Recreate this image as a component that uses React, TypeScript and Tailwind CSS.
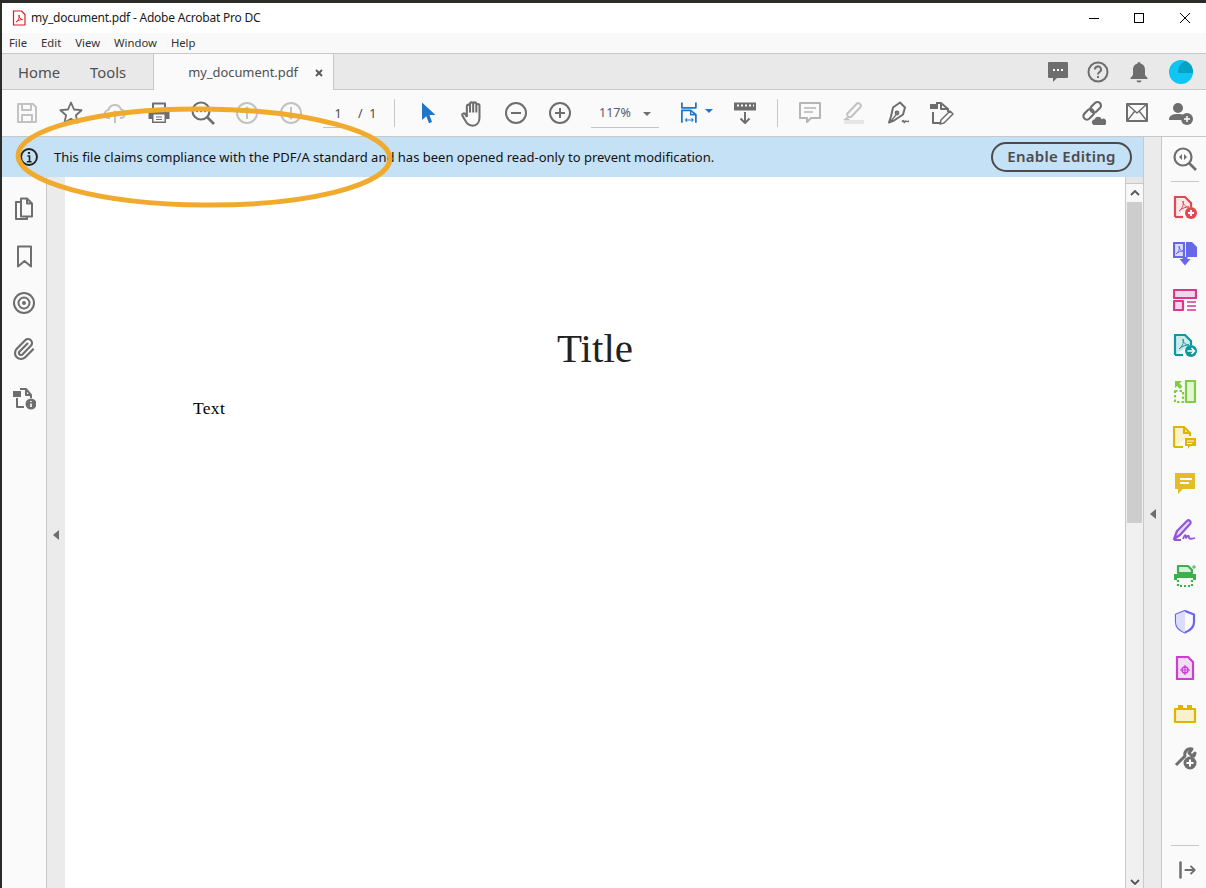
import type { ReactNode } from "react";

// 24x24 line icon, the toolbar's default look
function Ico({ children, color = "#6e6e6e", size = 24, sw = 2 }: { children: ReactNode; color?: string; size?: number; sw?: number }) {
  return (
    <svg width={size} height={size} viewBox="0 0 24 24" fill="none" stroke={color} strokeWidth={sw} strokeLinejoin="round">
      {children}
    </svg>
  );
}

const OFF = "#c2c2c2";
const GREY = "#6e6e6e";
const BLUE = "#1f76c9";

function Slot({ children }: { children: ReactNode }) {
  return <div className="flex h-[46px] w-[44px] shrink-0 items-center justify-center">{children}</div>;
}

function Divider() {
  return <div className="h-[28px] w-px shrink-0 bg-[#c8c8c8]" />;
}

function SideItem({ children }: { children: ReactNode }) {
  return <div className="flex h-[46px] shrink-0 items-center justify-center">{children}</div>;
}

function ToolBar() {
  return (
    <div className="flex h-[46px] shrink-0 items-center bg-[#fafafa] pl-[3px]">
      <Slot>
        <Ico color={OFF}><path d="M3 3h15l3 3v15H3z" /><path d="M7 3v6h9V3M7 21v-7h10v7" /></Ico>
      </Slot>
      <Slot>
        <Ico sw={1.8}><path d="M12 1.500l3 7 7.600.7-5.700 5 1.700 7.500-6.600-4-6.600 4 1.700-7.500-5.700-5 7.600-.7z" /></Ico>
      </Slot>
      <Slot>
        <Ico color={OFF}><path d="M7 17H6a4 4 0 0 1-.5-8A6.500 6.500 0 0 1 18 8.500a4.300 4.300 0 0 1 0 8.500h-1" /><path d="M12 22V11M8.500 14l3.500-3.500 3.500 3.500" /></Ico>
      </Slot>
      <Slot>
        <Ico>
          <path d="M6 8V2.500h12V8" strokeWidth="2" />
          <path d="M1.500 8h21v10h-3.500v4H5v-4H1.500z" fill={GREY} stroke="none" />
          <path d="M6.500 13.500h11V20.500h-11z" fill="#fafafa" stroke="none" />
          <path d="M9 16h6M9 18.500h6" strokeWidth="1" />
        </Ico>
      </Slot>
      <Slot>
        <Ico sw={2.2}>
          <circle cx="10" cy="10" r="8.500" />
          <path d="M16 16l7 7" strokeWidth="2.600" />
          <path d="M6 10h.01M10 10h.01M14 10h.01" strokeWidth="2.400" strokeLinecap="round" />
        </Ico>
      </Slot>
      <Slot>
        <Ico color={OFF}><circle cx="12" cy="12" r="10" /><path d="M12 18V7M8.500 10L12 6.500l3.500 3.500" /></Ico>
      </Slot>
      <Slot>
        <Ico color={OFF}><circle cx="12" cy="12" r="10" /><path d="M12 6v11M8.500 14l3.500 3.500 3.500-3.500" /></Ico>
      </Slot>
      <div className="flex w-[66px] shrink-0 items-center text-[12.500px] text-[#4b4b4b]">
        <span className="ml-[10px] w-[30px] border-b border-[#c4c4c4] pb-[3px] pt-[7px] text-center">1</span>
        <span className="ml-[5px] pt-[3px]">/&nbsp;&nbsp;1</span>
      </div>
      <div className="ml-[15px]"><Divider /></div>
      <div className="ml-[11px]">
        <Slot>
          <Ico color={BLUE}><path d="M6 1.500l13.500 12.500h-6l2.500 7-3 1.200-2.700-7L6 19z" fill={BLUE} stroke="none" /></Ico>
        </Slot>
      </div>
      <Slot>
        <Ico sw={1.8} size={27}>
          <path d="M7 15V5.500a1.400 1.400 0 0 1 2.800 0V11M9.800 11V3.500a1.400 1.400 0 0 1 2.800 0V11M12.600 11V3.500a1.400 1.400 0 0 1 2.800 0V11M15.400 11V5a1.400 1.400 0 0 1 2.800 0v11c0 4-2.500 6.800-6.200 6.800-3.300 0-4.800-1.500-6.300-4.300l-2.700-4.600c-.8-1.500 1.500-2.800 2.600-1.300L7 15" />
        </Ico>
      </Slot>
      <Slot>
        <Ico><circle cx="12" cy="12" r="10" /><path d="M7 12h10" /></Ico>
      </Slot>
      <Slot>
        <Ico><circle cx="12" cy="12" r="10" /><path d="M7 12h10M12 7v10" /></Ico>
      </Slot>
      <div className="ml-[9px] flex w-[68px] shrink-0 items-center border-b border-[#c4c4c4] pb-[4px] pl-[8px] pt-[6px] text-[12.500px] text-[#5a5a6e]">
        <span>117%</span>
        <span className="ml-auto mr-[8px] h-0 w-0 border-x-[4px] border-t-[4px] border-x-transparent border-t-[#6e6e6e]" />
      </div>
      <div className="ml-[22px] flex w-[32px] shrink-0 items-center">
        <Ico color={BLUE} size={24}>
          <path d="M1 0v6h16V0" strokeWidth="2" />
          <path d="M1 23V9h10l6 5v9" strokeWidth="2" />
          <path d="M11 9v5h6" strokeWidth="1.500" />
          <path d="M5 20h9M7 18l-2 2 2 2M12 18l2 2-2 2" strokeWidth="1.200" />
        </Ico>
        <span className="ml-[3px] mb-[4px] h-0 w-0 border-x-[4px] border-t-[4px] border-x-transparent border-t-[#1f76c9]" />
      </div>
      <div className="ml-[20px] flex w-[24px] shrink-0 items-center justify-center">
        <Ico>
          <path d="M1 1.500h22v8H1z" fill={GREY} stroke="none" />
          <path d="M4 4.500h2M8 4.500h2M12 4.500h2M16 4.500h2M20 4.500h1" stroke="#fafafa" strokeWidth="1.800" />
          <path d="M12 11v11M7.500 17.500L12 22l4.500-4.500" />
        </Ico>
      </div>
      <div className="ml-[20px]"><Divider /></div>
      <div className="ml-[10px]">
        <Slot>
          <Ico color="#b5b5b5"><path d="M2 2h20v15h-9l-4 4v-4H2z" /><path d="M6 7h12M6 11h9" strokeWidth="1.400" /></Ico>
        </Slot>
      </div>
      <Slot>
        <Ico color={OFF}>
          <path d="M6 16l-1-3L15 2.500c1.500-1.500 5 1.500 3.500 3.500L9 16z" />
          <path d="M2 21h20" stroke="#e6e6e6" strokeWidth="4" />
          <path d="M1 19l4-3 3 3z" fill={OFF} stroke="none" />
        </Ico>
      </Slot>
      <Slot>
        <Ico sw={2}>
          <path d="M14 1.500l5 5-2 7-9 6-5 2 2-6 2-9z" />
          <circle cx="11" cy="12" r="1.400" />
          <path d="M4 21l6-7" strokeWidth="1.200" />
          <path d="M16 21c1-2 1.500-2 2 0s1-2 2-1 1 1 3 0" strokeWidth="1.400" />
        </Ico>
      </Slot>
      <Slot>
        <Ico sw={2}>
          <path d="M0 3h8v5H0z" fill={GREY} stroke="none" />
          <path d="M6 2h5l7 6v3M3 11v11h7" />
          <path d="M11 2v6h7" />
          <path d="M10 23l1-4 9-9 3 3-9 9z" strokeWidth="1.500" />
        </Ico>
      </Slot>
      <div className="ml-auto flex items-center pr-[3px]">
        <Slot>
          <Ico sw={2} size={26}>
            <rect x="9" y="3.500" width="11" height="6.500" rx="3.200" transform="rotate(-45 14.500 6.750)" />
            <rect x="2.500" y="10" width="11" height="6.500" rx="3.200" transform="rotate(-45 8 13.250)" />
            <path d="M12.500 23a2.800 2.800 0 0 1 1-5.300 3.500 3.500 0 0 1 6.500 0 2.700 2.700 0 0 1 3 5.300z" fill={GREY} stroke="none" />
          </Ico>
        </Slot>
        <Slot>
          <Ico><path d="M2 3h20v17H2z" /><path d="M2 3l10 9 10-9M2 20l7.500-9.500M22 20l-7.500-9.500" strokeWidth="1.400" /></Ico>
        </Slot>
        <Slot>
          <Ico>
            <circle cx="9" cy="7" r="5" fill={GREY} stroke="none" />
            <path d="M0 19c0-5 4-6 9-6s6 1 7 2c-2 1-3 2-3 4z" fill={GREY} stroke="none" />
            <circle cx="18" cy="18" r="6" fill={GREY} stroke="none" />
            <path d="M15 18h6M18 15v6" stroke="#fff" strokeWidth="1.500" />
          </Ico>
        </Slot>
      </div>
    </div>
  );
}

function LeftPanel() {
  return (
    <div className="flex w-[45px] shrink-0 flex-col border-r border-[#c8c8c8] bg-[#fafafa] pr-[1px] pt-[9px]">
      <SideItem>
        <Ico sw={2}><path d="M9 1.500h6l5 5v13H9z" /><path d="M15 1.500v5h5" /><path d="M9 5H4v17h11v-2.500" /></Ico>
      </SideItem>
      <div className="flex h-[50px] shrink-0 items-center justify-center">
        <Ico><path d="M6 1.500h13v20l-6.500-5.500L6 21.500z" /></Ico>
      </div>
      <div className="flex h-[42px] shrink-0 items-center justify-center">
        <Ico><circle cx="12" cy="12" r="10" /><circle cx="12" cy="12" r="5.500" /><circle cx="12" cy="12" r="2" fill={GREY} stroke="none" /></Ico>
      </div>
      <div className="flex h-[50px] shrink-0 items-center justify-center">
        <Ico sw={2.200}><path d="m16 6-8.414 8.586a2 2 0 0 0 2.829 2.829l8.414-8.586a4 4 0 1 0-5.657-5.657l-8.379 8.551a6 6 0 1 0 8.485 8.485l8.379-8.551" /></Ico>
      </div>
      <div className="flex h-[48px] shrink-0 items-center justify-center">
        <Ico sw={2}>
          <path d="M1 5h8v6H1z" fill={GREY} stroke="none" />
          <path d="M8 3h6l5 6v3M5 12v9h7M14 3v6h5" />
          <circle cx="19" cy="18" r="5.500" fill={GREY} stroke="none" />
          <path d="M19 17.500v3.500M19 15v1" stroke="#fff" strokeWidth="1.600" />
        </Ico>
      </div>
    </div>
  );
}

function RightPanel() {
  return (
    <div className="flex w-[44px] shrink-0 flex-col items-center bg-[#fafafa] pl-[2px]">
      <div className="flex h-[44px] shrink-0 items-center justify-center">
        <Ico sw={2.2}>
          <circle cx="10" cy="10" r="8.500" />
          <path d="M16 16l7 7" strokeWidth="2.600" />
          <path d="M9 7l-3 3 3 3zM11 7l3 3-3 3z" fill={GREY} stroke="none" />
        </Ico>
      </div>
      <div className="h-px w-[28px] shrink-0 bg-[#c8c8c8]" />
      <div className="h-[3px] shrink-0" />
      <SideItem>
        <Ico color="#e34850" sw={2.200}>
          <path d="M2 21V1h10l6 6v4" fill="#fbe9ea" />
          <path d="M2 21h8" />
          <path d="M6 15c3-2 5-6 4-10 0 4 3 6 6 6-3 0-7 1-10 4z" strokeWidth="1" />
          <circle cx="18" cy="17" r="6" fill="#e34850" stroke="none" />
          <path d="M15 17h6M18 14v6" stroke="#fff" strokeWidth="2" />
        </Ico>
      </SideItem>
      <SideItem>
        <Ico color="#6767ec" sw={2.200}>
          <path d="M1 1h10v14H1z" fill="#dcdcfb" />
          <path d="M3 12c2-2 4-4 3-8 0 3 2 5 4 5-2 0-5 1-7 3z" strokeWidth="1" />
          <path d="M13 0h6l5 5v10H13z" fill="#6767ec" stroke="none" />
          <path d="M9.500 17v-2h5v2h3L12 23.500 6.500 17z" fill="#6767ec" stroke="none" />
        </Ico>
      </SideItem>
      <SideItem>
        <Ico color="#d83790" sw={2.200}>
          <path d="M1 2h22v8H1z" fill="#f6d5e7" />
          <path d="M1 13h9v9H1z" fill="#f6d5e7" />
          <path d="M14 14h9M14 18h9M14 22h9" strokeWidth="1.300" />
        </Ico>
      </SideItem>
      <SideItem>
        <Ico color="#12969d" sw={2.200}>
          <path d="M2 21V1h10l6 6v4" fill="#cfeaeb" />
          <path d="M2 21h8" />
          <path d="M6 15c3-2 5-6 4-10 0 4 3 6 6 6-3 0-7 1-10 4z" strokeWidth="1" />
          <circle cx="18" cy="17" r="6" fill="#12969d" stroke="none" />
          <path d="M14.500 17H21M18.500 14l3 3-3 3" stroke="#fff" strokeWidth="1.600" />
        </Ico>
      </SideItem>
      <SideItem>
        <Ico color="#7dcf3e" sw={2.200}>
          <path d="M13 1h9v21h-9z" fill="#e4f5d6" />
          <path d="M2 11h8v11H2z" strokeDasharray="2.500 2" />
          <path d="M2 1l7 0-2.500 2.500 3 3-2.500 2.500-3-3L2 8z" fill="#7dcf3e" stroke="none" />
        </Ico>
      </SideItem>
      <SideItem>
        <Ico color="#e0b400" sw={2.200}>
          <path d="M1 21V1h10l6 6v3M1 21h9" fill="#f9f1cc" />
          <path d="M11 1v6h6" />
          <path d="M12 12h11v8h-6l-2 3v-3h-3z" fill="#e0b400" stroke="none" />
          <path d="M14 15h7M14 17.500h5" stroke="#fff" strokeWidth="1" />
        </Ico>
      </SideItem>
      <SideItem>
        <Ico color="#e2bd26">
          <path d="M2 1h20v16H10l-5 5v-5H2z" fill="#e2bd26" stroke="none" />
          <path d="M7 7h12M7 11h9" stroke="#fff" strokeWidth="2" />
        </Ico>
      </SideItem>
      <SideItem>
        <Ico color="#9256d9" sw={2.200}>
          <path d="M1 21l3-8L14 3c2-2 5 1 3 3L7 17z" fill="#e6d9f6" />
          <path d="M1 22h7M10 21c2-5 3-5 3-1 2-3 3-3 3 0 1 1 3 1 6 0" strokeWidth="1.800" />
        </Ico>
      </SideItem>
      <SideItem>
        <Ico color="#3db04e" sw={2.200}>
          <path d="M5 9V2h10l4 4v3z" fill="#d5efd9" />
          <path d="M1 10h22v6h-3v-2H4v2H1z" fill="#3db04e" stroke="none" />
          <path d="M5 16v6h14v-6" strokeDasharray="2 2" />
          <path d="M21 1v4M19 3h4" strokeWidth="1" />
        </Ico>
      </SideItem>
      <SideItem>
        <Ico color="#6767ec" sw={2.200}>
          <path d="M12 1l9 3.500V12c0 5-4 8.500-9 10.500C7 20.500 3 17 3 12V4.500z" fill="#fafafa" />
          <path d="M12 1L3 4.500V12c0 5 4 8.500 9 10.500z" fill="#dcdcfb" stroke="none" />
        </Ico>
      </SideItem>
      <SideItem>
        <Ico color="#cb3fd0" sw={2.200}>
          <path d="M4 1h11l5 5v17H4z" fill="#f5dcf6" />
          <circle cx="12" cy="14" r="3" strokeWidth="1.400" />
          <path d="M12 9v10M7 14h10" strokeWidth="1.200" />
        </Ico>
      </SideItem>
      <SideItem>
        <Ico color="#e0b400" sw={2.200}>
          <path d="M2 7h20v13H2z" fill="#f9f1cc" />
          <path d="M5 3h5v4H5zM14 3h5v4h-5z" fill="#e0b400" stroke="none" />
        </Ico>
      </SideItem>
      <div className="flex h-[42px] shrink-0 items-center justify-center">
        <Ico>
          <path d="M3 19L12 10c-1-4 2-8 7-7l-3 4 3 3 3-3c0 2-1 3-2 4" strokeWidth="3" />
          <circle cx="17" cy="17" r="6.500" fill={GREY} stroke="none" />
          <path d="M13.500 17h7M17 13.500v7" stroke="#fff" strokeWidth="2" />
        </Ico>
      </div>
      <div className="mt-auto h-px w-[28px] shrink-0 bg-[#c8c8c8]" />
      <div className="flex h-[42px] shrink-0 items-center justify-center pl-[5px] pt-[5px]">
        <Ico size={20} sw={2.200}><path d="M3 3v18" strokeWidth="3" strokeLinecap="round" /><path d="M8 12h12M15 7l5 5-5 5" /></Ico>
      </div>
    </div>
  );
}

function ScrollBar() {
  return (
    <div className="flex w-[18px] shrink-0 flex-col border-l border-[#c8c8c8] bg-[#f0f0f0]">
      <div className="h-[7px] shrink-0 border-b border-[#c8c8c8] bg-[#e6e6e6]" />
      <div className="flex h-[18px] shrink-0 items-center justify-center bg-[#f8f8f8]">
        <svg width="10" height="6" viewBox="0 0 10 6" fill="none" stroke="#555" strokeWidth="1.800"><path d="M1 5l4-4 4 4" /></svg>
      </div>
      <div className="mx-[1px] h-[321px] shrink-0 bg-[#cdcdcd]" />
      <div className="mt-auto flex h-[12px] shrink-0 items-center justify-center">
        <svg width="10" height="6" viewBox="0 0 10 6" fill="none" stroke="#555" strokeWidth="1.800"><path d="M1 1l4 4 4-4" /></svg>
      </div>
    </div>
  );
}

export default function App() {
  return (
    <div className="relative flex h-[888px] w-[1206px] flex-col overflow-hidden bg-[#2b2b28] pt-[3px] pl-[2px] font-['Noto_Sans','Open_Sans',sans-serif] text-[#1a1a1a]">
      {/* title bar */}
      <div className="flex h-[30px] shrink-0 items-center bg-white pl-[10px] text-[12px]">
        <svg width="14" height="16" viewBox="0 0 14 16" fill="none" stroke="#e01b24" strokeWidth="1.200">
          <path d="M1.500 1h8l3.500 3.500V15H1.500z" />
          <path d="M4 12c2.500-1.500 3.500-4 3-7 0 3 1.500 4 3.500 4.500-2.500 0-4.500 1-6.500 2.500z" strokeWidth="0.900" />
        </svg>
        <span className="ml-[5px] tracking-[-0.22px]">my_document.pdf - Adobe Acrobat Pro DC</span>
        <div className="ml-auto flex items-center pr-[16px]">
          <span className="h-px w-[10px] bg-black" />
          <span className="ml-[35px] h-[10px] w-[10px] border border-black" />
          <svg className="ml-[36px]" width="10" height="10" viewBox="0 0 10 10" stroke="#000" strokeWidth="1"><path d="M0 0l10 10M10 0L0 10" /></svg>
        </div>
      </div>
      {/* menu bar */}
      <div className="flex h-[20px] shrink-0 items-center gap-[14px] bg-[#f9f9f9] pl-[7px] text-[11.300px] text-[#333]">
        <span>File</span>
        <span>Edit</span>
        <span>View</span>
        <span>Window</span>
        <span>Help</span>
      </div>
      {/* tabs */}
      <div className="flex h-[37px] shrink-0 border-y border-[#c8c8c8] bg-[#e9e9e9] text-[#505050]">
        <span className="ml-[16px] self-center pt-[1px] text-[14.800px]">Home</span>
        <span className="ml-[30px] self-center pt-[1px] text-[14.800px]">Tools</span>
        <div className="relative ml-[27px] -mb-px flex w-[181px] items-center border-x border-[#c8c8c8] bg-[#fafafa] pl-[34px] pt-[1px] text-[12.900px]">
          <span>my_document.pdf</span>
          <svg className="ml-[17px]" width="8" height="8" viewBox="0 0 8 8" stroke="#555" strokeWidth="1.800"><path d="M1 1l6 6M7 1L1 7" /></svg>
        </div>
        <div className="ml-auto flex items-center pr-[13px]">
          <svg width="22" height="22" viewBox="0 0 22 22"><path d="M2 1h18a1.500 1.500 0 0 1 1 1v14a1 1 0 0 1-1 1H10l-4 4v-4H2a1 1 0 0 1-1-1V2a1 1 0 0 1 1-1z" fill="#6e6e6e" /><path d="M6 9h2M10 9h2M14 9h2" stroke="#fff" strokeWidth="1.800" /></svg>
          <svg className="ml-[18px]" width="22" height="22" viewBox="0 0 22 22" fill="none" stroke="#6e6e6e" strokeWidth="2"><circle cx="11" cy="11" r="9.500" /><path d="M8 8.500a3 3 0 1 1 4.500 2.500c-1 .6-1.500 1-1.500 2.500" /><path d="M11 15v2" /></svg>
          <svg className="ml-[21px]" width="18" height="22" viewBox="0 0 18 22" fill="#6e6e6e"><path d="M9 1c1 0 1.500.8 1.500 1.500C14 3.500 15 6 15 9v5l2.500 3v1H.5v-1L3 14V9c0-3 1-5.500 4.500-6.500C7.500 1.800 8 1 9 1z" /><path d="M6.500 19.500h5a2.500 2 0 0 1-5 0z" /></svg>
          <span className="relative ml-[21px] h-[24px] w-[24px] overflow-hidden rounded-full bg-[#10c4f4]">
            <span className="absolute left-[9px] top-0 h-[13px] w-[15px] rounded-tl-[12px] bg-[#07a3c4]" />
          </span>
        </div>
      </div>
      <ToolBar />
      {/* body */}
      <div className="flex min-h-0 flex-1 border-t border-[#c8c8c8]">
        <div className="flex min-w-0 flex-1 flex-col">
          <div className="flex h-[40px] shrink-0 items-center bg-[#c5e1f6] pl-[18px] pr-[11px]">
            <svg width="18" height="18" viewBox="0 0 17 17" fill="none" stroke="#222" strokeWidth="1.800"><circle cx="8.500" cy="8.500" r="7.500" /><path d="M7 7.500h2V13M6.500 13h4.500" strokeWidth="1.500" /><path d="M8.500 3.800v1.800" strokeWidth="2" /></svg>
            <span className="ml-[16px] pt-[1px] text-[13px] text-[#111]">This file claims compliance with the PDF/A standard and has been opened read-only to prevent modification.</span>
            <button className="ml-auto h-[30px] w-[141px] rounded-full border-2 border-[#4b4b4b] pb-[2px] text-[15px] font-semibold tracking-[0.3px] text-[#4b4b4b]">Enable Editing</button>
          </div>
          <div className="flex min-h-0 flex-1">
            <LeftPanel />
            <div className="flex w-[18px] shrink-0 items-center justify-center bg-[#ebebeb] pt-[5px]">
              <span className="h-0 w-0 border-y-[5px] border-r-[6px] border-y-transparent border-r-[#6e6e6e]" />
            </div>
            <div className="min-w-0 flex-1 bg-white pt-[151px] font-['Liberation_Serif',serif] text-black">
              <div className="text-center text-[41px] font-light leading-[40px] text-[#222]">Title</div>
              <div className="ml-[128px] mt-[31px] text-[17.500px] leading-[18px] tracking-[0.3px]">Text</div>
            </div>
            <ScrollBar />
          </div>
        </div>
        <div className="flex w-[19px] shrink-0 items-center justify-center border-x border-[#c8c8c8] bg-[#ebebeb] pt-[3px]">
          <span className="h-0 w-0 border-y-[5px] border-r-[6px] border-y-transparent border-r-[#6e6e6e]" />
        </div>
        <RightPanel />
      </div>
      {/* hand-drawn annotation over the screenshot */}
      <svg className="pointer-events-none absolute left-0 top-0" width="1206" height="888" fill="none">
        <ellipse cx="204" cy="157" rx="186" ry="48" stroke="#f0ab2e" strokeWidth="5" transform="rotate(0.5 204 157)" />
      </svg>
    </div>
  );
}
